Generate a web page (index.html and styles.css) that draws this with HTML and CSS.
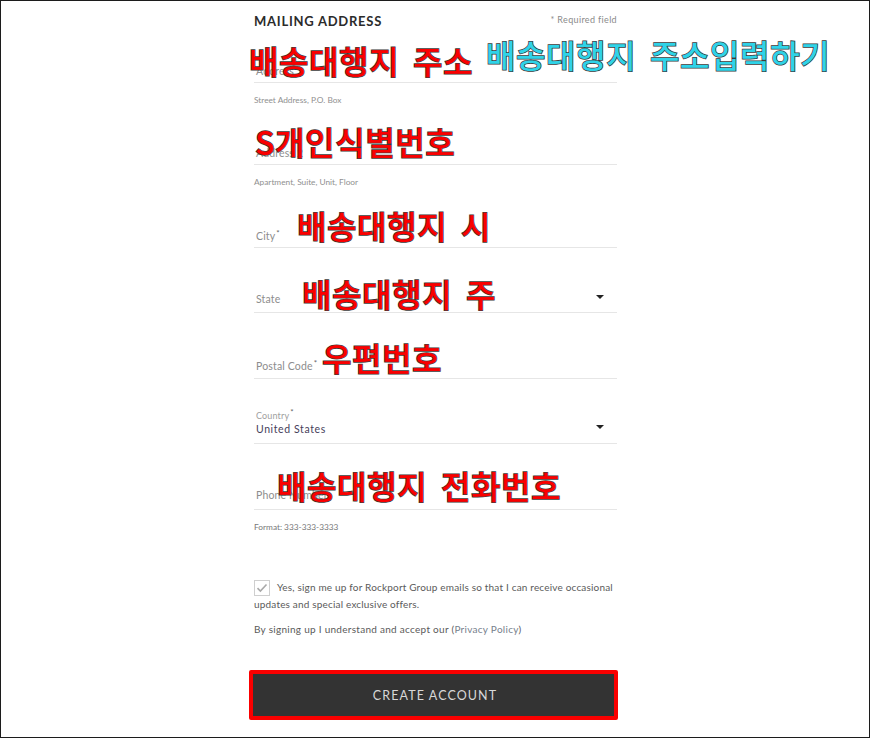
FILE: index.html
```html
<!DOCTYPE html>
<html lang="en">
<head>
    <meta charset="UTF-8">
    <meta name="viewport" content="width=device-width, initial-scale=1.0">
    <title>Mailing Address</title>
    <link rel="stylesheet" href="styles.css">
</head>
<body>
    <div class="frame">
        <form class="address-form">
            <div class="form-head">
                <h2>MAILING ADDRESS</h2>
                <span class="required-note">* Required field</span>
            </div>

            <div class="field field-first"><label>Address *</label></div>
            <p class="hint">Street Address, P.O. Box</p>

            <div class="field field-second"><label>Address 2</label></div>
            <p class="hint">Apartment, Suite, Unit, Floor</p>

            <div class="field field-city"><label>City<sup>*</sup></label></div>

            <div class="field field-state">
                <label>State</label>
                <span class="caret"></span>
            </div>

            <div class="field field-zip"><label>Postal Code<sup>*</sup></label></div>

            <div class="field field-country">
                <div>
                    <label class="small-label">Country<sup>*</sup></label>
                    <div class="value">United States</div>
                </div>
                <span class="caret caret-country"></span>
            </div>

            <div class="field field-phone"><label>Phone Number</label></div>
            <p class="hint hint-dark">Format: 333-333-3333</p>

            <div class="signup">
                <p class="signup-text">
                    <span class="checkbox">
                        <svg width="12" height="10" viewBox="0 0 12 10"><path d="M1.5 5.2 4.4 8 10.5 1.5" fill="none" stroke="#a9a9a9" stroke-width="1.6"/></svg>
                    </span>Yes, sign me up for Rockport Group emails so that I can receive occasional updates and special exclusive offers.
                </p>
                <p class="policy">By signing up I understand and accept our (<a href="#">Privacy Policy</a>)</p>
            </div>

            <div class="button-outline">
                <button type="button">CREATE ACCOUNT</button>
            </div>
        </form>

        <!-- annotations pasted over the screenshot -->
        <span class="note note-address">배송대행지 주소</span>
        <span class="note note-input">배송대행지 주소입력하기</span>
        <span class="note note-pcc">S개인식별번호</span>
        <span class="note note-city">배송대행지 시</span>
        <span class="note note-state">배송대행지 주</span>
        <span class="note note-zip">우편번호</span>
        <span class="note note-phone">배송대행지 전화번호</span>
    </div>
</body>
</html>
```

FILE: styles.css
```css
* {
    margin: 0;
    padding: 0;
    box-sizing: border-box;
}

body {
    background: #fff;
    font-family: 'Lato', 'Liberation Sans', sans-serif;
    overflow: hidden;
}

.frame {
    position: relative;
    width: 870px;
    height: 738px;
    border: 1px solid #1c1c1c;
    overflow: hidden;
}

.address-form {
    width: 363px;
    margin-left: 253px;
}

.form-head {
    display: flex;
    justify-content: space-between;
    height: 81px;
    padding-top: 12px;
}

h2 {
    font-size: 13px;
    line-height: 16px;
    font-weight: 700;
    letter-spacing: 0.75px;
    color: #2b2b2b;
}

.required-note {
    font-size: 9px;
    line-height: 14px;
    letter-spacing: 0.35px;
    color: #8a8a8a;
}

.field {
    display: flex;
    justify-content: space-between;
    align-items: flex-end;
    border-bottom: 1px solid #e6e6e6;
    padding: 0 13px 5px 2px;
    font-size: 10.5px;
    letter-spacing: 0.15px;
    color: #8d8d8d;
}

.field-first {
    height: 1px;
    padding-bottom: 0;
    overflow: visible;
}

.field-first label {
    margin-bottom: 5px;
    white-space: nowrap;
}

.field-second {
    height: 47px;
}

.field-city {
    height: 48px;
}

.field-state {
    height: 65px;
    padding-bottom: 7px;
}

.field-zip {
    height: 66px;
    padding-bottom: 6px;
}

.field-country {
    height: 65px;
    padding-bottom: 6px;
}

.field-phone {
    height: 66px;
    padding-bottom: 8px;
}

sup {
    font-size: 8px;
    line-height: 0;
    margin-left: 1px;
    color: #666;
}

.small-label {
    display: block;
    font-size: 9px;
    line-height: 13px;
    color: #a0a0a0;
}

.value {
    font-size: 10.5px;
    line-height: 15px;
    letter-spacing: 0.6px;
    color: #46405a;
}

.caret {
    width: 0;
    height: 0;
    margin-bottom: 6px;
    border-left: 4px solid transparent;
    border-right: 4px solid transparent;
    border-top: 4px solid #222;
}

.caret-country {
    margin-bottom: 8px;
}

.hint {
    height: 35px;
    padding-top: 11px;
    font-size: 8.3px;
    line-height: 12px;
    color: #909090;
}

.hint-dark {
    color: #777;
    height: 69px;
}

.signup {
    font-size: 10px;
    color: #5a5a5a;
}

.signup-text {
    line-height: 17px;
    letter-spacing: 0.18px;
}

.checkbox {
    display: inline-flex;
    align-items: center;
    justify-content: center;
    width: 16px;
    height: 16px;
    margin-right: 7px;
    vertical-align: -2px;
    border: 1px solid #cfcfcf;
}

.policy {
    margin-top: 9px;
    line-height: 14px;
    letter-spacing: 0.28px;
}

.policy a {
    color: #76808c;
    text-decoration: none;
}

.button-outline {
    width: 369px;
    margin: 34px 0 0 -5px;
    border: 4px solid #fa0000;
    border-radius: 2px;
}

button {
    display: block;
    width: 100%;
    height: 42px;
    padding: 1px 0 0 3px;
    border: 0;
    background: #333;
    color: #d8d8d8;
    font-family: 'Lato', 'Liberation Sans', sans-serif;
    font-size: 12.5px;
    letter-spacing: 1.1px;
}

.note {
    position: absolute;
    font-family: 'Noto Sans CJK KR', 'Liberation Sans', sans-serif;
    font-size: 32px;
    line-height: 36px;
    font-weight: 500;
    letter-spacing: 0.6px;
    word-spacing: 6px;
    white-space: nowrap;
    color: #fa0000;
    -webkit-text-stroke: 1.5px #3a3a3a;
    paint-order: stroke fill;
}

.note-address { left: 248px; top: 41px; }
.note-input { left: 485px; top: 35px; color: #2fd3e8; }
.note-pcc { left: 254px; top: 122px; }
.note-city { left: 296px; top: 206px; }
.note-state { left: 301px; top: 274px; }
.note-zip { left: 321px; top: 338px; }
.note-phone { left: 276px; top: 466px; }
```
